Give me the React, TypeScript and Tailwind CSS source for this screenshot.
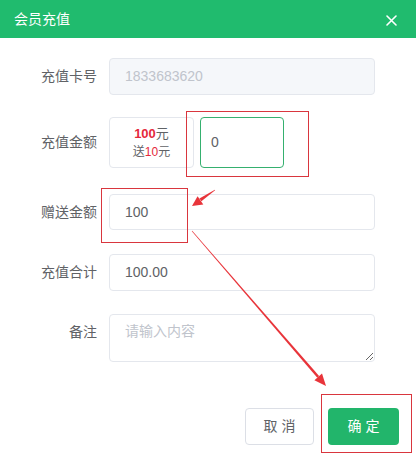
import React from "react";

const font = { fontFamily: '"Liberation Sans", "Noto Sans CJK SC", sans-serif' };

function Label({ text, top }: { text: string; top?: boolean }) {
  return (
    <div
      className={`w-[109px] shrink-0 pr-3 text-right text-[14px] text-[#606266] ${
        top ? "leading-[36px]" : ""
      }`}
    >
      {text}
    </div>
  );
}

export default function App() {
  return (
    <div className="relative h-[463px] w-[416px] overflow-hidden bg-white" style={font}>
      {/* header */}
      <div className="flex h-[38px] items-center justify-between bg-[#20bb6e] pl-[14px] pr-[19px]">
        <span className="text-[14px] text-white">会员充值</span>
        <svg width="11" height="11" viewBox="0 0 11 11" className="mt-[3px]">
          <path d="M1 1L10 10M10 1L1 10" stroke="white" strokeWidth="1.6" strokeLinecap="round" />
        </svg>
      </div>

      <div className="pt-[20px]">
        <div className="flex h-[37px] items-center">
          <Label text="充值卡号" />
          <div className="flex h-full w-[266px] items-center rounded-[4px] border border-[#e4e7ed] bg-[#f5f7fa] px-[15px] text-[14px] text-[#c0c4cc]">
            1833683620
          </div>
        </div>

        <div className="mt-[22px] flex h-[51px] items-center">
          <Label text="充值金额" />
          <div className="flex h-full w-[85px] flex-col items-center justify-center rounded-[4px] border border-[#e4e7ed] leading-[19px]">
            <div className="text-[13px] text-[#606266]">
              <span className="font-bold text-[#e5293b]">100</span>元
            </div>
            <div className="text-[12px] text-[#606266]">
              送<span className="text-[#e5293b]">10</span>元
            </div>
          </div>
          <div className="ml-[6px] flex h-full w-[84px] items-center rounded-[4px] border border-[#35b06f] px-[10px] text-[14px] text-[#606266]">
            0
          </div>
        </div>

        <div className="mt-[26px] flex h-[36px] items-center">
          <Label text="赠送金额" />
          <div className="flex h-full w-[266px] items-center rounded-[4px] border border-[#e4e7ed] px-[15px] text-[14px] text-[#606266]">
            100
          </div>
        </div>

        <div className="mt-[24px] flex h-[37px] items-center">
          <Label text="充值合计" />
          <div className="flex h-full w-[266px] items-center rounded-[4px] border border-[#e4e7ed] px-[15px] text-[14px] text-[#606266]">
            100.00
          </div>
        </div>

        <div className="mt-[23px] flex h-[48px] items-start">
          <Label text="备注" top />
          <textarea
            placeholder="请输入内容"
            className="h-full w-[266px] rounded-[4px] border border-[#e4e7ed] px-[15px] py-[6px] text-[14px] leading-[20px] text-[#606266] outline-none placeholder:text-[#c0c4cc]"
            style={font}
          />
        </div>

        <div className="mt-[46px] flex h-[37px] justify-end gap-[14px] pr-[17px]">
          <button className="h-full w-[69px] rounded-[4px] border border-[#dcdfe6] bg-white pl-[4px] text-[14px] tracking-[4px] text-[#606266]">
            取消
          </button>
          <button className="h-full w-[71px] rounded-[4px] bg-[#22b56b] pl-[4px] text-[14px] tracking-[4px] text-white">
            确定
          </button>
        </div>
      </div>

      {/* annotations */}
      <div className="absolute left-[186px] top-[111px] h-[66px] w-[123px] border border-[#d9363e]" />
      <div className="absolute left-[101px] top-[188px] h-[55px] w-[87px] border border-[#d9363e]" />
      <div className="absolute left-[321px] top-[394px] h-[59px] w-[91px] border border-[#d9363e]" />
      <svg className="pointer-events-none absolute left-0 top-0" width="416" height="463">
        <polygon
          points="214.9,189.8 215.1,190.2 201.4,201.3 199.4,198.5"
          fill="#e8343a"
        />
        <polygon points="192,206 197.6,196.2 203.3,204.6" fill="#e8343a" />
        <polygon
          points="191.8,231.2 192.2,230.8 319.1,376.1 317.3,377.7"
          fill="#e8343a"
        />
        <polygon points="326,386 314.4,380.2 322,373.6" fill="#e8343a" />
      </svg>
    </div>
  );
}
